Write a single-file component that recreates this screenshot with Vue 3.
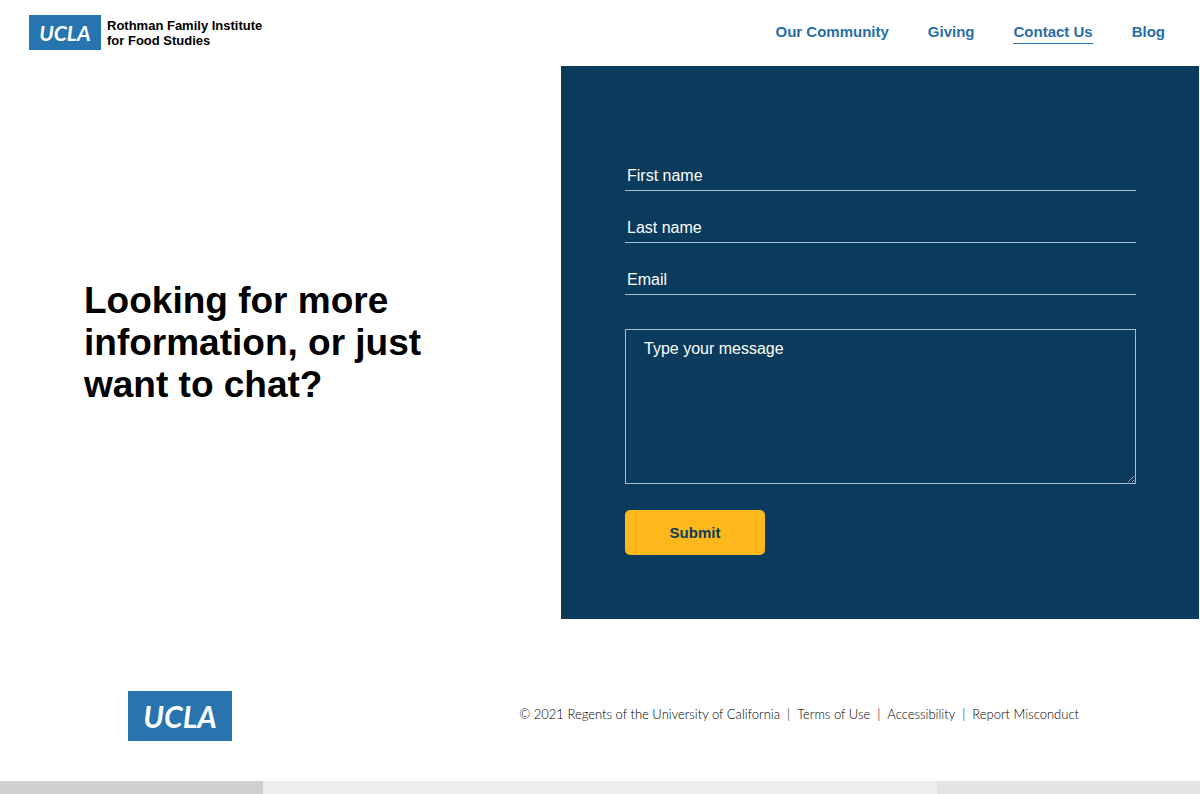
<script setup>
import { ref } from 'vue'

const links = [
  { label: 'Our Community' },
  { label: 'Giving' },
  { label: 'Contact Us', active: true },
  { label: 'Blog' },
]

const fields = ref([
  { id: 'first-name', label: 'First name', type: 'text', value: '' },
  { id: 'last-name', label: 'Last name', type: 'text', value: '' },
  { id: 'email', label: 'Email', type: 'email', value: '' },
])

const message = ref('')
const legal = ['Terms of Use', 'Accessibility', 'Report Misconduct']
</script>

<template>
  <div class="page">
    <header class="header">
      <a class="brand" href="#">
        <span class="mark">UCLA</span>
        <span class="brand-name">Rothman Family Institute<br />for Food Studies</span>
      </a>
      <nav class="nav">
        <a v-for="l in links" :key="l.label" href="#" :class="{ active: l.active }">{{ l.label }}</a>
      </nav>
    </header>

    <main class="contact">
      <section class="intro">
        <h1>Looking for more information, or just want to chat?</h1>
      </section>
      <form class="panel" @submit.prevent>
        <div class="fields">
          <input
            v-for="f in fields"
            :id="f.id"
            :key="f.id"
            v-model="f.value"
            :type="f.type"
            :placeholder="f.label"
            :aria-label="f.label"
          />
        </div>
        <textarea v-model="message" placeholder="Type your message" aria-label="Type your message"></textarea>
        <button type="submit">Submit</button>
      </form>
    </main>

    <footer class="footer">
      <a class="mark mark-large" href="#">UCLA</a>
      <p class="legal">
        <span>© 2021 Regents of the University of California</span>
        <template v-for="item in legal" :key="item">
          <span class="bar">|</span>
          <a href="#">{{ item }}</a>
        </template>
      </p>
    </footer>

    <div class="strip"><i></i><i></i><i></i></div>
  </div>
</template>

<style>
body {
  margin: 0;
  background: #fff;
}
</style>

<style scoped>
.page {
  min-height: 100vh;
  display: flex;
  flex-direction: column;
  font-family: "Liberation Sans", Arial, sans-serif;
  color: #000;
}

a {
  color: inherit;
  text-decoration: none;
}

.header {
  display: flex;
  align-items: center;
  justify-content: space-between;
  padding: 15px 35px 16px 29px;
}

.brand {
  display: flex;
  align-items: center;
  gap: 6px;
}

.mark {
  display: flex;
  align-items: center;
  justify-content: center;
  width: 72px;
  height: 35px;
  background: #2774ae;
  color: #fff;
  font: italic 700 21px/1 Lato, sans-serif;
}

.brand-name {
  font-size: 13px;
  font-weight: 700;
  line-height: 15px;
}

.nav {
  display: flex;
  gap: 39px;
  color: #2a6da8;
  font-size: 15px;
  font-weight: 700;
  line-height: 22px;
}

.nav a {
  border-bottom: 1px solid transparent;
}

.nav .active {
  border-color: #2774ae;
}

.contact {
  display: grid;
  grid-template-columns: 561fr 638fr;
  margin-right: 1px;
}

.intro {
  display: flex;
  align-items: center;
  padding: 0 84px;
}

h1 {
  max-width: 360px;
  margin: 0;
  font-size: 37px;
  line-height: 42px;
}

.panel {
  display: flex;
  flex-direction: column;
  align-items: flex-start;
  padding: 95px 63px 64px 64px;
  background: #0b3b5c;
}

.fields {
  display: flex;
  flex-direction: column;
  gap: 22px;
  width: 100%;
}

input,
textarea {
  box-sizing: border-box;
  width: 100%;
  margin: 0;
  border: 1px solid #a9bccb;
  border-radius: 0;
  outline: 0;
  background: transparent;
  color: #fff;
  font: 16px/20px "Liberation Sans", Arial, sans-serif;
}

input {
  height: 30px;
  padding: 0 2px;
  border-width: 0 0 1px;
}

textarea {
  height: 155px;
  margin: 34px 0 26px;
  padding: 9px 18px;
  resize: vertical;
}

::placeholder {
  color: #fff;
  opacity: 1;
}

button {
  width: 140px;
  height: 45px;
  padding: 0;
  border: 0;
  border-radius: 5px;
  background: #ffb81c;
  color: #0b3b5c;
  font: 700 15px/20px "Liberation Sans", Arial, sans-serif;
}

.footer {
  display: flex;
  flex: 1;
  align-items: center;
  justify-content: space-between;
  padding: 32px 121px 0 128px;
}

.mark-large {
  width: 104px;
  height: 50px;
  font-size: 30px;
}

.legal {
  display: flex;
  gap: 7px;
  margin: 0;
  padding-bottom: 4px;
  color: #000;
  font: 300 13px/20px Lato, sans-serif;
}

.strip {
  display: grid;
  grid-template-columns: 263fr 674fr 263fr;
  height: 13px;
  background: #ededed;
}

.strip i:first-child {
  background: #d0d0d0;
}

.strip i:last-child {
  background: #e3e3e3;
}
</style>
